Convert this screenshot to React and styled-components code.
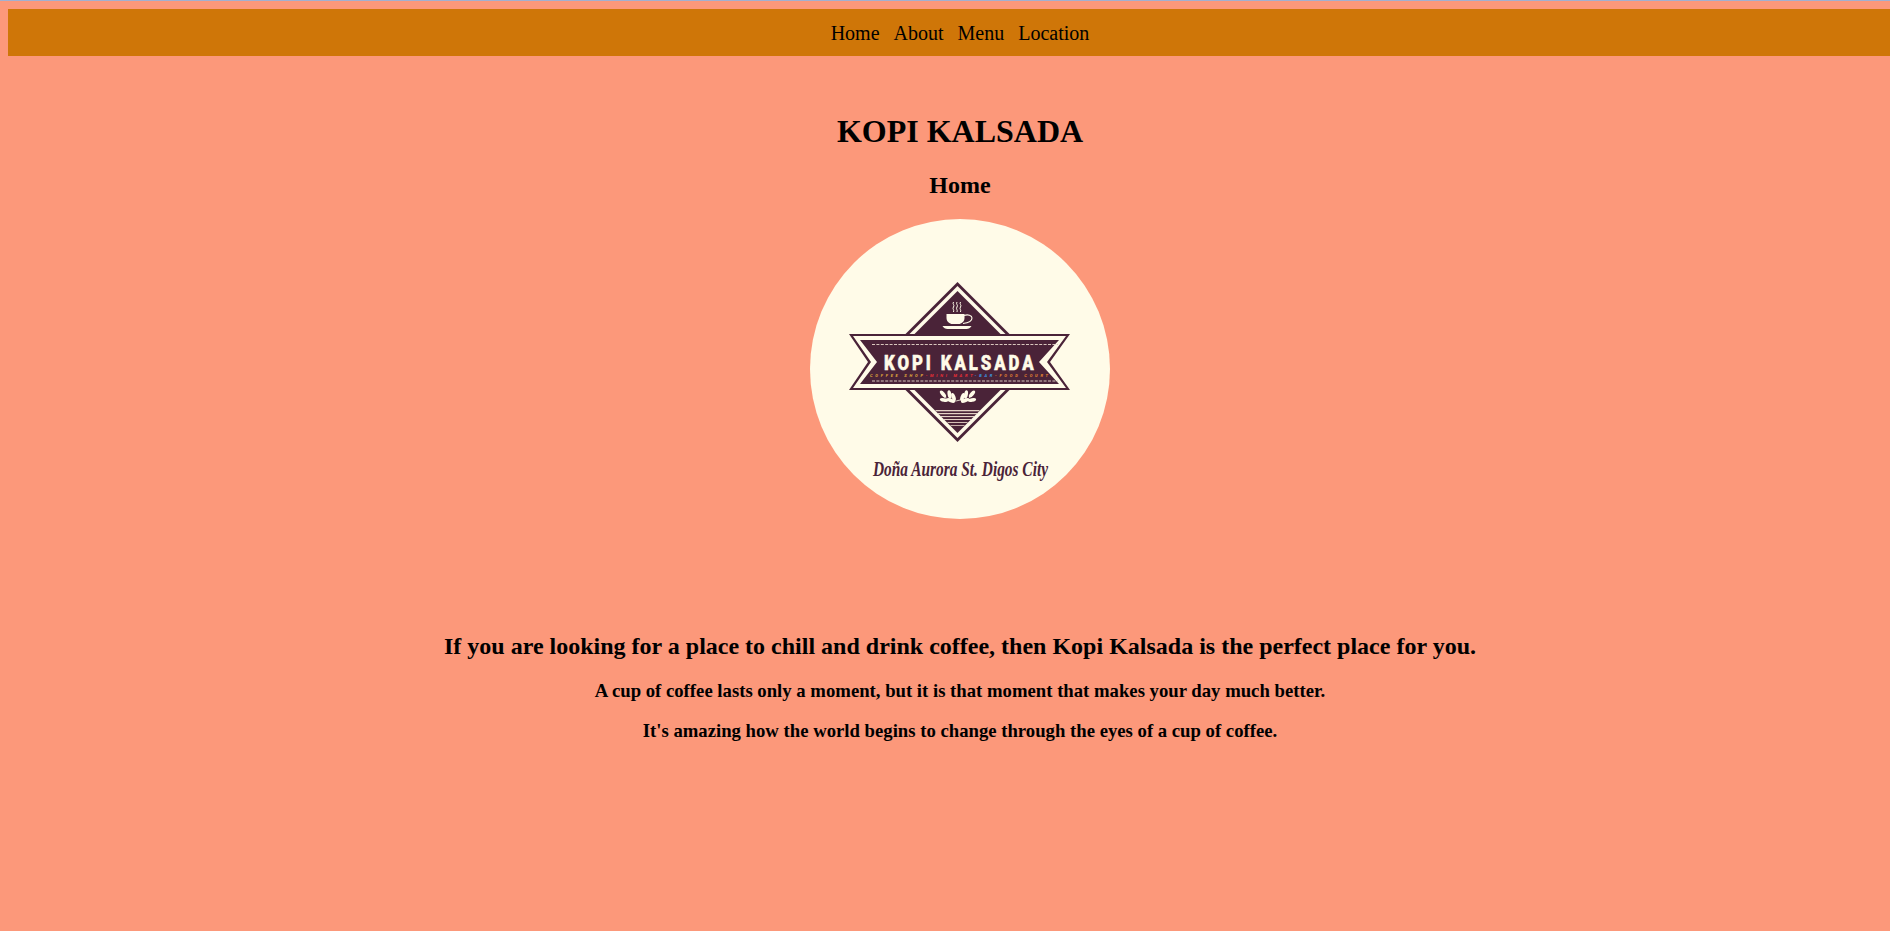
import styled, { createGlobalStyle } from "styled-components";

const GlobalStyle = createGlobalStyle`
  html, body {
    margin: 0;
    padding: 0;
    min-height: 100%;
    overflow: hidden;
    background-color: #fc987a;
  }
  #root {
    width: 1920px;
  }
`;

const TopEdge = styled.div`
  height: 1px;
  background-color: #a3b0d0;
`;

const Page = styled.div`
  min-height: 930px;
  padding: 8px 8px 0;
  box-sizing: border-box;
  font-family: "Liberation Serif", "Times New Roman", serif;
  color: #000;
  text-align: center;
`;

const NavBar = styled.nav`
  height: 47px;
  box-sizing: border-box;
  padding-top: 1px;
  background-color: #cf7608;
  display: flex;
  justify-content: center;
  align-items: center;
  gap: 14px;
`;

const NavLink = styled.a`
  font-size: 20px;
  line-height: 23px;
  color: #000;
`;

const Title = styled.h1`
  font-size: 32px;
  line-height: 37px;
  margin: 57px 0 22px;
`;

const PageName = styled.h2`
  font-size: 24px;
  line-height: 27px;
  margin: 0 0 20px;
`;

const Logo = styled.svg`
  display: block;
  width: 300px;
  height: 300px;
  margin: 0 auto;
`;

const Lead = styled.h3`
  font-size: 24px;
  line-height: 27px;
  margin: 114px 0 20px;
`;

const Quote = styled.p`
  font-size: 18.72px;
  line-height: 22px;
  font-weight: bold;
  margin: 0 0 18px;
`;

const DARK = "#4a2338";
const CREAM = "#fffbe8";

function Leaf({ x, y, rotate }) {
  return <ellipse cx={x} cy={y} rx="4.2" ry="1.9" fill={CREAM} transform={`rotate(${rotate} ${x} ${y})`} />;
}

function KopiLogo() {
  const stripes = [
    [191, 1.3, 22],
    [194, 1.2, 19.5],
    [197, 1.1, 16.5],
    [200, 1, 13.5],
    [203, 0.9, 10],
    [206, 0.8, 7],
  ];
  return (
    <Logo viewBox="0 0 300 300">
      <circle cx="150" cy="150" r="150" fill={CREAM} />

      {/* diamond */}
      <polygon points="147.5,63 227.5,143 147.5,223 67.5,143" fill={DARK} />
      <polygon points="147.5,67 223.5,143 147.5,219 71.5,143" fill={CREAM} />
      <polygon points="147.5,72 218.5,143 147.5,214 76.5,143" fill={DARK} />

      {/* banner */}
      <polygon points="39,115 260,115 240,143 260,171 39,171 58,143" fill={DARK} />
      <polygon points="43,117 256,117 237,143 256,169 43,169 61,143" fill={CREAM} />
      <polygon points="50,121 249,121 229,143 249,165 50,165 67,143" fill={DARK} />
      <line x1="62" y1="125.5" x2="248" y2="125.5" stroke="#d9c7bd" strokeWidth="1" strokeDasharray="3 1.4" />
      <line x1="62" y1="162" x2="248" y2="162" stroke="#d9c7bd" strokeWidth="1" strokeDasharray="3 1.4" />

      {/* squeezed sideways, the logo lettering is narrow with wide gaps */}
      <text transform="translate(74 151) scale(0.8 1)" textLength="187" fontFamily="Roboto, sans-serif" fontWeight="900" fontSize="21" stroke={CREAM} strokeWidth="0.5" fill={CREAM}>
        KOPI KALSADA
      </text>
      <text x="60" y="158" textLength="178" fontFamily="Roboto, sans-serif" fontWeight="700" fontStyle="italic" fontSize="4" fill="#e6b03c">
        COFFEE SHOP
        <tspan fill="#ee2f35">-MINI MART</tspan>
        <tspan fill="#3a9be6">-BAR</tspan>
        <tspan fill="#ea8a30">-FOOD COURT</tspan>
      </text>

      {/* cup */}
      <path d="M143.5 83c-1.5 2 1.5 3 0 5s1 2.5 0 5M147 83c-1.5 2 1.5 3 0 5s1 2.5 0 5M150.5 83c-1.5 2 1.5 3 0 5s1 2.5 0 5" fill="none" stroke={CREAM} strokeWidth="1" />
      <path d="M136.5 95h18v4c0 3.5-3 6-6 6h-6c-3 0-6-2.5-6-6z" fill={CREAM} />
      <path d="M154 96.5c4-1.5 8 0 8 2.5 0 3-4 5-9 5.5" fill="none" stroke={CREAM} strokeWidth="1.1" />
      <path d="M132.5 107h29c-1 1.8-3 3-5 3h-19c-2 0-4-1.2-5-3z" fill={CREAM} />

      {/* leaves */}
      <path d="M134 178c6 3 10 5 14 3.5s7 0 9-1 4-3 6-6" fill="none" stroke={CREAM} strokeWidth="0.8" />
      <Leaf x="133" y="175" rotate="50" />
      <Leaf x="139.5" y="175.5" rotate="80" />
      <Leaf x="134" y="181" rotate="10" />
      <Leaf x="141" y="181.5" rotate="20" />
      <Leaf x="143.5" y="178" rotate="70" />
      <Leaf x="162" y="175" rotate="-50" />
      <Leaf x="156" y="175.5" rotate="-80" />
      <Leaf x="162" y="181" rotate="-10" />
      <Leaf x="155" y="181.5" rotate="-20" />
      <Leaf x="152.5" y="178" rotate="-70" />

      {stripes.map(([y, h, half]) => (
        <rect key={y} x={147.5 - half} y={y} width={half * 2} height={h} fill="#e6d3c6" />
      ))}

      <text x="63" y="257" textLength="175" lengthAdjust="spacingAndGlyphs" fontFamily="'Liberation Serif', serif" fontStyle="italic" fontWeight="700" fontSize="20" fill={DARK}>
        Doña Aurora St. Digos City
      </text>
    </Logo>
  );
}

export default function App() {
  return (
    <>
      <GlobalStyle />
      <TopEdge />
      <Page>
        <NavBar>
          <NavLink>Home</NavLink>
          <NavLink>About</NavLink>
          <NavLink>Menu</NavLink>
          <NavLink>Location</NavLink>
        </NavBar>
        <Title>KOPI KALSADA</Title>
        <PageName>Home</PageName>
        <KopiLogo />
        <Lead>If you are looking for a place to chill and drink coffee, then Kopi Kalsada is the perfect place for you.</Lead>
        <Quote>A cup of coffee lasts only a moment, but it is that moment that makes your day much better.</Quote>
        <Quote>It's amazing how the world begins to change through the eyes of a cup of coffee.</Quote>
      </Page>
    </>
  );
}
